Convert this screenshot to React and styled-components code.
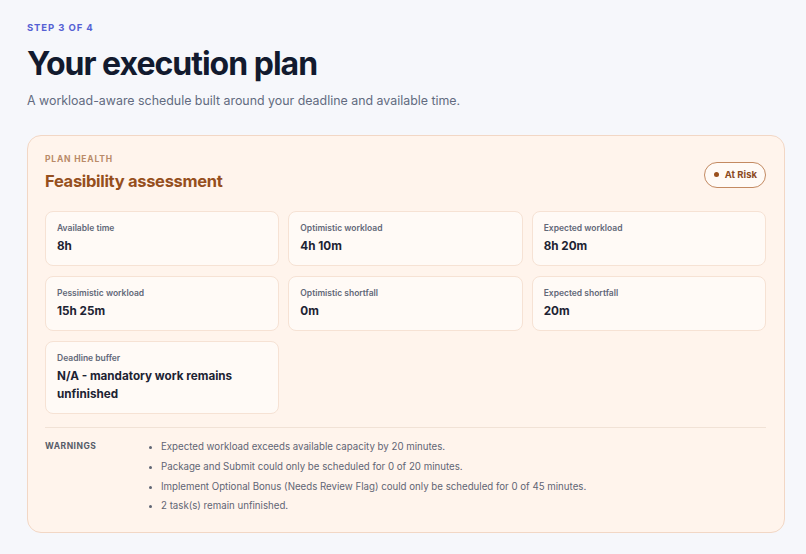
import React from 'react'
import styled, { createGlobalStyle } from 'styled-components'

const GlobalStyle = createGlobalStyle`
  html, body {
    margin: 0;
    padding: 0;
    background: #f6f7fb;
  }
  body {
    font-family: Inter, "Noto Sans", sans-serif;
    -webkit-font-smoothing: antialiased;
  }
`

const Page = styled.div`
  padding: 22px 21px 22px 27px;
`

const Step = styled.div`
  font-size: 9.5px;
  font-weight: 700;
  letter-spacing: 0.9px;
  color: #5561d4;
  text-transform: uppercase;
`

const Title = styled.h1`
  margin: 11px 0 0;
  font-size: 32px;
  line-height: 40px;
  font-weight: 700;
  letter-spacing: -1px;
  color: #121a2e;
`

const Subtitle = styled.p`
  margin: 7px 0 0;
  font-size: 12.4px;
  line-height: 20px;
  color: #626b80;
`

const Card = styled.section`
  margin-top: 24px;
  background: #fff4ec;
  border: 1px solid #f2d7c5;
  border-radius: 14px;
  padding: 18px 18px 19px 17px;
`

const CardHead = styled.div`
  display: flex;
  justify-content: space-between;
  align-items: center;
`

const Eyebrow = styled.div`
  font-size: 8.5px;
  font-weight: 700;
  letter-spacing: 0.8px;
  color: #b98a68;
  text-transform: uppercase;
`

const CardTitle = styled.h2`
  margin: 5px 0 0;
  font-size: 16.5px;
  line-height: 24px;
  font-weight: 700;
  letter-spacing: -0.3px;
  color: #964f1d;
`

const Badge = styled.span`
  box-sizing: border-box;
  display: inline-flex;
  align-items: center;
  gap: 6px;
  height: 26px;
  padding: 0 8px 0 9px;
  margin-top: 2px;
  border: 1.5px solid #c38a62;
  border-radius: 999px;
  background: #fffaf6;
  font-size: 9.5px;
  font-weight: 700;
  color: #8c4a1e;
  &::before {
    content: '';
    width: 5px;
    height: 5px;
    border-radius: 50%;
    background: #9a4f1c;
  }
`

const Grid = styled.div`
  margin-top: 18px;
  display: grid;
  grid-template-columns: repeat(3, 1fr);
  gap: 10px 9px;
`

const Stat = styled.div`
  background: #fffaf6;
  border: 1px solid #f6e2d4;
  border-radius: 8px;
  padding: 10px 11px 10px;
`

const StatLabel = styled.div`
  font-size: 8.5px;
  line-height: 12px;
  font-weight: 600;
  color: #626878;
`

const StatValue = styled.div`
  margin-top: 3px;
  font-size: 11.7px;
  line-height: 18px;
  font-weight: 700;
  color: #1d2333;
`

const Warnings = styled.div`
  margin-top: 13px;
  padding-top: 12px;
  border-top: 1.5px solid #f1e2d6;
  display: grid;
  grid-template-columns: 104px 1fr;
`

const WarnLabel = styled.div`
  font-size: 8.5px;
  font-weight: 700;
  letter-spacing: 0.5px;
  line-height: 12px;
  color: #575c68;
  text-transform: uppercase;
`

const WarnList = styled.ul`
  margin: 0;
  padding: 0 0 0 12px;
  list-style: disc;
  li {
    font-size: 9.7px;
    line-height: 14px;
    color: #5f6574;
    margin-bottom: 5.8px;
  }
  li::marker {
    font-size: 8px;
  }
  li:last-child {
    margin-bottom: 0;
  }
`

const stats = [
  { label: 'Available time', value: '8h' },
  { label: 'Optimistic workload', value: '4h 10m' },
  { label: 'Expected workload', value: '8h 20m' },
  { label: 'Pessimistic workload', value: '15h 25m' },
  { label: 'Optimistic shortfall', value: '0m' },
  { label: 'Expected shortfall', value: '20m' },
  { label: 'Deadline buffer', value: 'N/A - mandatory work remains unfinished' },
]

const warnings = [
  'Expected workload exceeds available capacity by 20 minutes.',
  'Package and Submit could only be scheduled for 0 of 20 minutes.',
  'Implement Optional Bonus (Needs Review Flag) could only be scheduled for 0 of 45 minutes.',
  '2 task(s) remain unfinished.',
]

export default function App() {
  return (
    <>
      <GlobalStyle />
      <Page>
        <Step>Step 3 of 4</Step>
        <Title>Your execution plan</Title>
        <Subtitle>A workload-aware schedule built around your deadline and available time.</Subtitle>

        <Card>
          <CardHead>
            <div>
              <Eyebrow>Plan health</Eyebrow>
              <CardTitle>Feasibility assessment</CardTitle>
            </div>
            <Badge>At Risk</Badge>
          </CardHead>

          <Grid>
            {stats.map((s) => (
              <Stat key={s.label}>
                <StatLabel>{s.label}</StatLabel>
                <StatValue>{s.value}</StatValue>
              </Stat>
            ))}
          </Grid>

          <Warnings>
            <WarnLabel>Warnings</WarnLabel>
            <WarnList>
              {warnings.map((w) => (
                <li key={w}>{w}</li>
              ))}
            </WarnList>
          </Warnings>
        </Card>
      </Page>
    </>
  )
}
